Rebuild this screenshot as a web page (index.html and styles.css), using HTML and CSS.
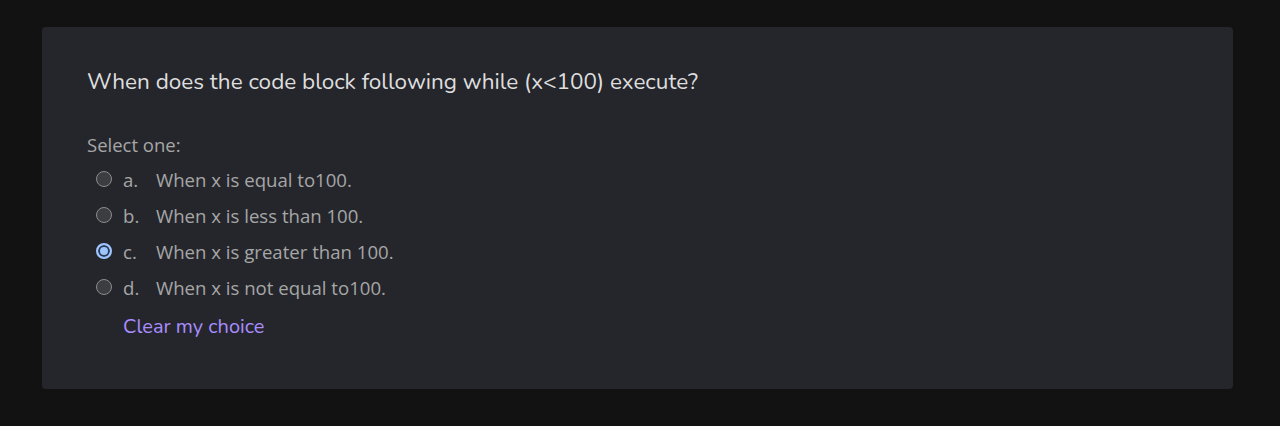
FILE: index.html
```html
<!DOCTYPE html>
<html>
<head>
<meta charset="utf-8">
<link rel="stylesheet" href="styles.css">
</head>
<body>
<div class="card">
  <h2 class="question">When does the code block following while (x&lt;100) execute?</h2>
  <div class="prompt">Select one:</div>
  <div class="answers">
    <div class="answer"><span class="radio"></span><span class="letter">a.</span><span class="text">When x is equal to100.</span></div>
    <div class="answer"><span class="radio"></span><span class="letter">b.</span><span class="text">When x is less than 100.</span></div>
    <div class="answer"><span class="radio checked"></span><span class="letter">c.</span><span class="text">When x is greater than 100.</span></div>
    <div class="answer"><span class="radio"></span><span class="letter">d.</span><span class="text">When x is not equal to100.</span></div>
  </div>
  <a class="clear" href="#">Clear my choice</a>
</div>
</body>
</html>
```
FILE: styles.css
```css
html, body {
  margin: 0;
  background: #121212;
}
body {
  padding: 27px 47px 38px 42px;
}
.card {
  background: #25262c;
  border-radius: 4px;
  padding: 40px 44px 44px 45px;
  height: 362px;
  box-sizing: border-box;
}
.question {
  margin: 0;
  font-family: "Nunito", "Lato", "Open Sans", sans-serif;
  font-weight: 400;
  font-size: 22.5px;
  line-height: 30px;
  color: #dedede;
}
.prompt {
  margin-top: 34px;
  font-family: "Open Sans", sans-serif;
  font-size: 18.5px;
  line-height: 28px;
  color: #a6a6a6;
}
.answers {
  display: flex;
  flex-direction: column;
  margin-top: 2px;
}
.answer {
  display: flex;
  align-items: center;
  height: 36px;
  padding-left: 9px;
  font-family: "Open Sans", sans-serif;
  font-size: 18.6px;
  color: #a6a6a6;
}
.radio {
  width: 16px;
  height: 16px;
  box-sizing: border-box;
  border-radius: 50%;
  border: 1.5px solid #8c8c8c;
  background: #3c3d41;
  flex: none;
}
.radio.checked {
  border: 2px solid #9ec5fe;
  background: #9ec5fe;
  box-shadow: inset 0 0 0 2px #2a3a55;
}
.letter {
  margin-left: 11px;
  width: 33px;
}
.clear {
  display: inline-block;
  margin-top: 8px;
  margin-left: 36px;
  font-family: "Nunito", "Lato", "Open Sans", sans-serif;
  font-size: 20px;
  color: #a98dff;
  text-decoration: none;
}
```
